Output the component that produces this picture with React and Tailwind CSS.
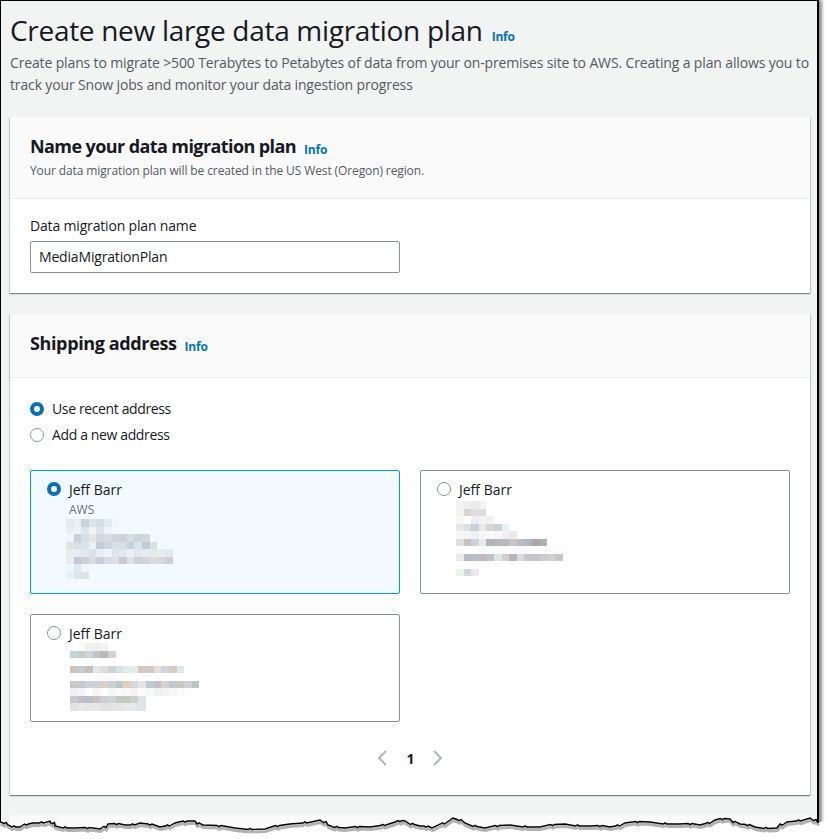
// 모자이크 처리된 주소 블록 — 한 줄에 색 하나씩
const TILE_A = [
  'e3e9ee e8eef1 c9d3db dbe4ea d5dde5 dfeaf1 eef8fc',
  'e9eef0 eef3f5 dde6ec eef5f8 dee4e8 eaf3f8 f0fafe',
  'eff6f9 c8d0dc d5dfe7 e0e8ec d8d8d8 d5dde3 d3d3de c9d3dc d4dfe7 c8d6dd d2d8d8',
  'dfe3e6 d9dedf dae4ec ecf2f4 c3cede cfd6de d9e1e7 d9dfe8 c9d0da dae3ec c5cbd5 d3e1e8',
  'e8edf1 e6edf3 e4e9ee dbe1e8 e4eef4 edf3f6 dee5ea e1e9ed eaf0f3 e1e7ec e5ebef e4e9ec e8edf0 e2e8ec',
  'e7ecef c2c9d4 c9d2dc d7dcdf c8cfdb d4dce3 dbe0e4 c9c9cf dde3e6 ccd3da d0d6dc d9dde0 d4d9dd c8d0d8',
  'eef8f9 dde8f0 edf6fa',
  'e9f0f3 dfe5e9 dfe3e8',
]

const TILE_B = [
  'f3f3f3 eeeff1 e9eaec f0f3f8',
  'f3f3f1 d6d6d6 e0e1dc dfdcdf',
  'f8f8f3 ffffff edeef0 f2f3f5 f0f0f2',
  'ece7e1 dde0e2 cbd0d6 e6eaee dcd5cc c9d1dc e6f0f8',
  'f6f6f6 f2f3f4 f0f1f3 f5f7f9 fafafa f8f8f8 f0eef1 ebe9eb ffffff fbfdfc',
  'e5dfdc cbc0c0 cdd4e0 efe9e6 b5b3be b9b7bb b3bac0 cec2c8 b7bcc2 adb8c6 ada5ac a9b3b2',
  'faf9fb ffffff ffffff f8fafc f8fbfb f9fafc f9fafb fbfbfb fafafa fbfbfb fcfcfc fcfcfc fcfcfc fbfbfb',
  'eee9e3 b9b9c4 b9c0ca c5baba bfc2d0 dfe6e8 d5cfca bcb4b9 d8dcdf c5c7c9 c2c6c8 d0cace d0d3cc c5c8d0',
  'ffffff ffffff ffffff ffffff ffffff fdfdf8',
  'ecf5ec d4d8dc e8e9eb',
]

const TILE_C = [
  'ffffff f9f9f9 f0f0f0 eef0f0 f4f4f4',
  'c3d5dc c3cec2 d5d2dc bcc6cd bdb8b4 d3d3d6',
  'ffffff',
  'd3c2b6 c0ccd6 c4c0bc dfe9ee e3dcd6 d0d2d8 d5e2e8 e0eee8 e8ecec d8c8bc cfc8cc e8e0dc d3d3e0 d8ccbc dde9ef',
  'fdfdfd fcfcfc fcfcfc fafafa fafafa fafafa fdfdfd fdfdfd',
  'c9c9c4 c5c8d4 cdd0d8 cfd1d6 dcd0c8 ccd0d4 bcc6cc e8cfb8 d3d8e0 e8e4e0 bccdd5 c3c0c8 d8d2d4 c0c8d0 cac6c0 d0d0d4 bcc6bc',
  'f2f2f4 f4f4f4 fcfcfc f8f4f2 fdfdfd f4f6f8 fafafa f8f8f8 f2f4f8 fafafa f8f8f8 f2f2f4 f4f4f6 f6f6f8 fbfbfb fdfdfd',
  'c8c8d8 c0c0c4 b4c0cc c8c4c0 ccd0d4 d0d4d8 c4c8c0 c4ccc0 ccd0c8 dce4e8',
  'e2e2e2 e8e8e8 e2e4e8 e8e8e4 e0e2e6 e4e4e8 e4e8e4 e8e8e4 e4e8ec dfe4e8',
]

const TEAR_POINTS = [
  [0,822],[8,825],[20,827],[33,823],[50,821],[55,826],[75,828],[100,829],[108,824],[125,825],[140,823],[160,827],
  [175,823],[195,821],[203,825],[235,828],[265,829],[290,824],[320,820],[328,825],[345,828],[370,827],[395,822],
  [405,821],[420,826],[432,828],[453,818],[465,823],[485,828],[510,825],[540,827],[565,824],[590,826],[610,827],
  [625,823],[650,822],[680,824],[700,825],[715,820],[730,819],[740,824],[755,827],[777,828],[787,822],[810,818],[818,823],
]

// 구간마다 잔 떨림을 넣어 거친 가장자리 표현
const TEAR = TEAR_POINTS.flatMap(([x, y], i) => {
  const next = TEAR_POINTS[i + 1]
  if (!next) return [`${x},${y}`]
  const mx = (x + next[0]) / 2
  const my = (y + next[1]) / 2 + (i % 2 ? 1 : -1)
  return [`${x},${y}`, `${mx - 2},${my}`, `${mx},${my + (i % 2 ? -1.2 : 1.2)}`, `${mx + 2},${my}`]
}).join(' ')

function Info({ className = '' }) {
  return <span className={`text-[12px] font-bold tracking-[-0.2px] text-[#0073bb] ${className}`}>Info</span>
}

function Radio({ on }) {
  if (on) return <span className="w-[14px] h-[14px] rounded-full bg-white border-[4px] border-[#0073bb] shrink-0" />
  return <span className="w-[14px] h-[14px] rounded-full bg-white border-[1.5px] border-[#879596] shrink-0" />
}

function Mosaic({ rows, className = '' }) {
  return (
    <div className={className}>
      {rows.map((row, i) => (
        <div key={i} className="flex h-[7.5px]">
          {row.split(' ').map((c, j) => (
            <span key={j} className="w-[7.62px] h-full" style={{ background: `#${c}` }} />
          ))}
        </div>
      ))}
    </div>
  )
}

function Tile({ selected, org, rows, mosaicClass, className = '' }) {
  return (
    <div className={`rounded-[2px] border px-4 pt-[8px] ${selected ? 'border-[#00a1c9] bg-[#f1faff]' : 'border-[#879596] bg-white'} ${className}`}>
      <div className="flex items-center gap-2 h-[20px] text-[14px] text-[#16191f]">
        <Radio on={selected} />
        <span>Jeff Barr</span>
      </div>
      <div className="pl-[22px]">
        {org && <div className="text-[12px] leading-[18px] text-[#687078] h-[20px] pt-[2px]">{org}</div>}
        <Mosaic rows={rows} className={mosaicClass} />
      </div>
    </div>
  )
}

function CardHeader({ title, sub, titleClass, className = '' }) {
  return (
    <div className={`bg-[#fafafa] border-b border-[#eaeded] px-5 ${className}`}>
      <div className="flex items-baseline gap-2">
        <h2 className={`text-[18px] leading-[22px] font-bold text-[#16191f] ${titleClass}`}>{title}</h2>
        <Info className="translate-y-px" />
      </div>
      {sub && <p className="text-[12px] leading-[16px] mt-[5px] tracking-[-0.11px] text-[#545b64]">{sub}</p>}
    </div>
  )
}

const CARD = 'bg-white shadow-[0_1px_1px_0_rgba(0,28,36,0.3),1px_1px_1px_0_rgba(0,28,36,0.15),-1px_1px_1px_0_rgba(0,28,36,0.15)]'

export default function App() {
  return (
    <div className="relative w-[829px] h-[839px] bg-white overflow-hidden font-['Open_Sans','Noto_Sans',sans-serif]">
      <div className="w-[819px] h-[830px] bg-[#f2f3f3] border-l border-t border-r-2 border-black shadow-[3px_0_3px_#8a8a8a] pl-[9px] pr-[7px]">
        <div className="flex items-baseline gap-[9px] pt-[11px]">
          <h1 className="text-[28px] leading-[36px] tracking-[-0.3px] text-[#16191f]">Create new large data migration plan</h1>
          <Info />
        </div>
        <p className="text-[14px] leading-[22px] mt-[4px] -mr-[4px] tracking-[-0.14px] text-[#545b64]">
          Create plans to migrate &gt;500 Terabytes to Petabytes of data from your on-premises site to AWS. Creating a plan allows you to track your Snow jobs and monitor your data ingestion progress
        </p>

        <section className={`mt-[21px] ${CARD}`}>
          <CardHeader className="h-[82px] pt-[18px]" titleClass="tracking-[-0.59px]" title="Name your data migration plan" sub="Your data migration plan will be created in the US West (Oregon) region." />
          <div className="px-5 pt-[17px] h-[94px]">
            <div className="text-[14px] leading-[20px] tracking-[-0.17px] text-[#16191f]">Data migration plan name</div>
            <div className="mt-[5px] w-[370px] h-[32px] rounded-[2px] border border-[#879596] bg-white px-2 text-[14px] leading-[30px] tracking-[-0.17px] text-[#16191f]">MediaMigrationPlan</div>
          </div>
        </section>

        <section className={`mt-[21px] ${CARD}`}>
          <CardHeader className="h-[64px] pt-[18px]" titleClass="tracking-[-0.375px]" title="Shipping address" />
          <div className="px-5 pt-[21px] h-[417px]">
            <div className="flex flex-col gap-[6px] text-[14px] leading-[20px] tracking-[-0.37px] text-[#16191f]">
              <label className="flex items-center gap-2"><Radio on />Use recent address</label>
              <label className="flex items-center gap-2"><Radio />Add a new address</label>
            </div>
            <div className="grid grid-cols-2 gap-5 mt-[25px] w-[760px]">
              <Tile selected org="AWS" rows={TILE_A} mosaicClass="-ml-[3px]" className="h-[124px]" />
              <Tile rows={TILE_B} mosaicClass="-ml-[3px] mt-[2px]" className="h-[124px]" />
              <Tile rows={TILE_C} mosaicClass="ml-px" className="h-[108px]" />
            </div>
            <div className="flex items-center justify-center gap-[18px] mt-[26px] h-[20px]">
              <svg width="10" height="16" viewBox="0 0 10 16" fill="none" stroke="#aab7b8" strokeWidth="2">
                <polyline points="9,1 2,8 9,15" />
              </svg>
              <span className="ml-px text-[14px] font-bold text-[#16191f]">1</span>
              <svg width="10" height="16" viewBox="0 0 10 16" fill="none" stroke="#aab7b8" strokeWidth="2">
                <polyline points="1,1 8,8 1,15" />
              </svg>
            </div>
          </div>
        </section>

        <div className="mt-[20px] h-[20px] bg-[#fafafa]" />
      </div>

      {/* 찢어진 종이 가장자리 */}
      <svg className="absolute left-0 top-0" width="829" height="839" viewBox="0 0 829 839" fill="none">
        <polygon points={`${TEAR} 829,818 829,839 0,839`} fill="white" />
        <polyline points={TEAR} transform="translate(0.5 2.5)" stroke="#555" strokeWidth="3" opacity="0.45" />
        <polyline points={TEAR} stroke="#000" strokeWidth="1.4" />
      </svg>
    </div>
  )
}
